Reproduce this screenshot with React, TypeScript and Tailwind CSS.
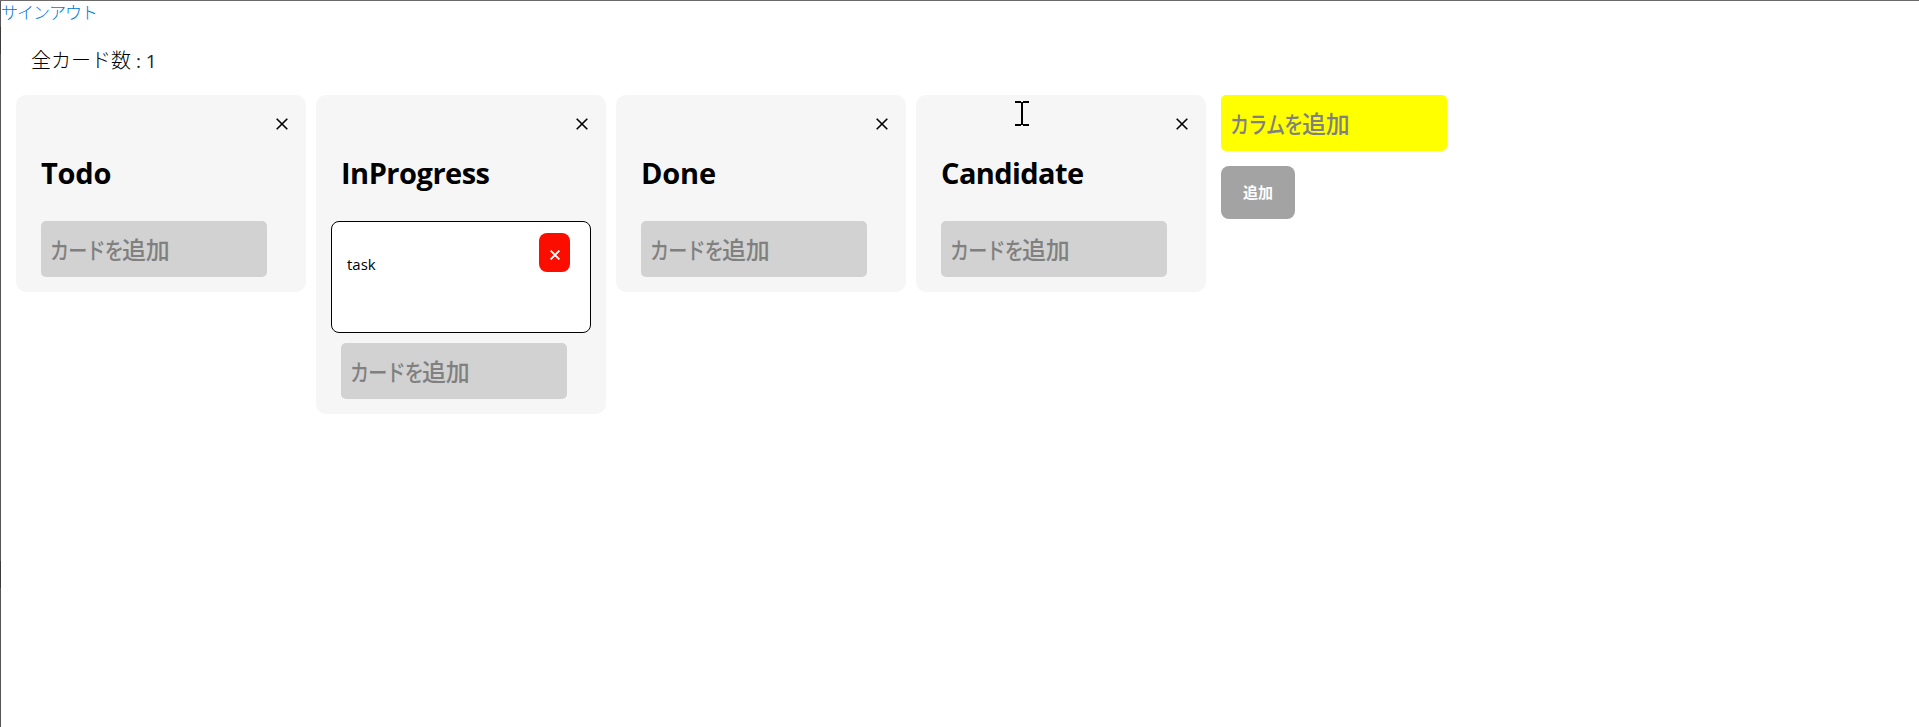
import React from "react";

const columns: { title: string; titleClass: string; tasks: string[] }[] = [
  { title: "Todo", titleClass: "tracking-[-0.2px]", tasks: [] },
  { title: "InProgress", titleClass: "tracking-[-0.5px]", tasks: ["task"] },
  { title: "Done", titleClass: "tracking-[-0.2px]", tasks: [] },
  { title: "Candidate", titleClass: "tracking-[-0.6px]", tasks: [] },
];

function Cross({ className }: { className: string }) {
  return (
    <svg className={className} viewBox="0 0 12 12" fill="none" stroke="currentColor">
      <path d="M0.7 0.7 11.3 11.3M11.3 0.7 0.7 11.3" />
    </svg>
  );
}

function Field({ kana, kanji, className }: { kana: string; kanji: string; className: string }) {
  return (
    <div
      className={`flex h-14 w-[226px] items-center rounded-[5px] px-[9px] text-[24px] leading-none font-medium whitespace-nowrap text-[#808080] ${className}`}
    >
      <span className="w-[72px]">
        <span className="inline-block origin-left scale-x-[0.83] text-[23px] tracking-[-1px]">{kana}</span>
      </span>
      <span className="tracking-[-0.3px]">{kanji}</span>
    </div>
  );
}

function Card({ text }: { text: string }) {
  return (
    <div className="mb-[10px] flex h-28 w-[260px] items-start justify-between rounded-lg border border-black bg-white pt-[11px] pr-5 pl-[15px]">
      <p className="pt-[19px] font-['Open_Sans','Noto_Sans',sans-serif] text-[15px] leading-6 text-black">{text}</p>
      <button className="flex h-[39px] w-[31px] items-center justify-center rounded-lg bg-[#fb0d00] pt-1 text-white">
        <Cross className="size-[10px] stroke-[2.2]" />
      </button>
    </div>
  );
}

export default function App() {
  return (
    <div className="flex h-screen overflow-hidden border-t border-[#6c6a6b] bg-white font-['Noto_Sans_CJK_JP',sans-serif]">
      <div className="flex w-px shrink-0 flex-col bg-[#565657]">
        <div className="mt-[26px] h-[27px] bg-[#3a3a3b]" />
        <div className="mt-[507px] h-[27px] bg-[#3a3a3b]" />
      </div>
      <div className="flex grow flex-col">
        <a className="h-6 text-[17px] leading-[22px] font-light tracking-[-1px] text-[#0078d7]">サインアウト</a>
        <p className="mt-[20px] h-[31px] pl-[30px] text-[20px] leading-[30px] font-light text-black">
          全カード数
          <span className="font-['Open_Sans',sans-serif] text-[19px] font-normal text-[#222222]"> : 1</span>
        </p>
        <main className="mt-[19px] flex items-start gap-[10px] pl-[15px]">
          {columns.map((column) => (
            <section
              key={column.title}
              className="relative flex w-[290px] flex-col rounded-[10px] bg-[#f6f6f6] px-[15px] pb-[15px]"
            >
              <div className="flex h-[54px] justify-end pt-[23px] pr-[3px]">
                <Cross className="size-3 stroke-[1.6]" />
              </div>
              <h2
                className={`mt-px mb-[26px] h-[45px] pl-[10px] font-['Open_Sans',sans-serif] text-[29px] leading-[45px] font-bold text-black ${column.titleClass}`}
              >
                {column.title}
              </h2>
              {column.tasks.map((task) => (
                <Card key={task} text={task} />
              ))}
              <Field kana="カードを" kanji="追加" className="ml-[10px] bg-[#d2d2d2]" />
              {column.title === "Candidate" && (
                <svg
                  className="absolute top-[6px] left-[99px] h-[25px] w-[14px]"
                  viewBox="0 0 14 25"
                  fill="none"
                  stroke="#000"
                  strokeWidth="2"
                >
                  <path d="M0 1h6M8 1h6M7 1v23M0 24h6M8 24h6" />
                </svg>
              )}
            </section>
          ))}
          <div className="ml-[5px] flex flex-col items-start">
            <Field kana="カラムを" kanji="追加" className="bg-[#ffff00]" />
            <button className="mt-[15px] h-[53px] w-[74px] rounded-lg bg-[#a3a3a3] text-[15px] font-bold text-white">
              追加
            </button>
          </div>
        </main>
      </div>
    </div>
  );
}
